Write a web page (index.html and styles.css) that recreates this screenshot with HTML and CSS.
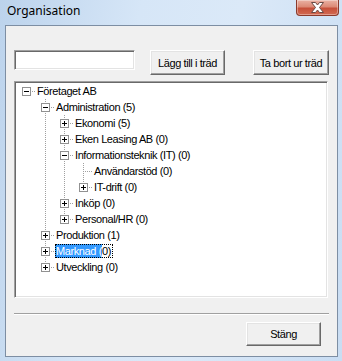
FILE: index.html
```html
<!doctype html>
<html>
<head>
    <meta charset="utf-8">
    <title>Organisation</title>
    <link rel="stylesheet" href="styles.css">
</head>
<body>
	<div class="titlebar">
		<span class="title">Organisation</span>
		<span class="close">
			<svg width="15" height="11" viewBox="0 0 15 11"><path d="M1.5 0.5h4l2 2.5 2-2.5h4l-4 5 4 5h-4l-2-2.5-2 2.5h-4l4-5z" fill="#fff" stroke="#6b4a44" stroke-width="1"/></svg>
		</span>
	</div>
	<div class="client">
		<div class="toprow">
			<input class="field" type="text">
			<button class="btn add">Lägg till i träd</button>
			<button class="btn remove">Ta bort ur träd</button>
		</div>
		<div class="tree">
			<div class="row"><span class="c root"><i class="box"></i></span><span class="label">Företaget AB</span></div>
			<div class="row"><span class="c"></span><span class="c t"><i class="box"></i></span><span class="label">Administration (5)</span></div>
			<div class="row"><span class="c"></span><span class="c i"></span><span class="c t"><i class="box plus"></i></span><span class="label">Ekonomi (5)</span></div>
			<div class="row"><span class="c"></span><span class="c i"></span><span class="c t"><i class="box plus"></i></span><span class="label">Eken Leasing AB (0)</span></div>
			<div class="row"><span class="c"></span><span class="c i"></span><span class="c t"><i class="box"></i></span><span class="label">Informationsteknik (IT) (0)</span></div>
			<div class="row"><span class="c"></span><span class="c i"></span><span class="c i"></span><span class="c t"></span><span class="label">Användarstöd (0)</span></div>
			<div class="row"><span class="c"></span><span class="c i"></span><span class="c i"></span><span class="c l"><i class="box plus"></i></span><span class="label">IT-drift (0)</span></div>
			<div class="row"><span class="c"></span><span class="c i"></span><span class="c t"><i class="box plus"></i></span><span class="label">Inköp (0)</span></div>
			<div class="row"><span class="c"></span><span class="c i"></span><span class="c l"><i class="box plus"></i></span><span class="label">Personal/HR (0)</span></div>
			<div class="row"><span class="c"></span><span class="c t"><i class="box plus"></i></span><span class="label">Produktion (1)</span></div>
			<div class="row"><span class="c"></span><span class="c t"><i class="box plus"></i></span><span class="label sel"><span class="hl">Marknad (</span>0)</span></div>
			<div class="row"><span class="c"></span><span class="c l"><i class="box plus"></i></span><span class="label">Utveckling (0)</span></div>
		</div>
		<div class="sep"></div>
		<div class="bottomrow">
			<button class="btn close-btn">Stäng</button>
		</div>
	</div>
</body>
</html>
```

FILE: styles.css
```css
*{margin:0; padding:0; box-sizing:border-box;}
body {width:342px; height:361px; overflow:hidden; background:linear-gradient(100deg,#bcd3ec 0%,#d6e6f7 35%,#dbe9f8 60%,#c9ddf3 100%);}

.titlebar {display:flex; align-items:flex-start; height:25px; padding-left:7px; padding-right:3px;}
.title {font:12px "Noto Sans",sans-serif; color:#000; line-height:16px; margin-top:3px;}
.close {margin-left:auto; width:43px; height:16px; display:flex; align-items:center; justify-content:center; border:1px solid #8a3a2c; border-top:none; border-radius:0 0 4px 4px; background:linear-gradient(#eab2a4 0%,#dc8a76 45%,#c6503a 55%,#d26a52 100%); box-shadow:inset 0 0 0 1px rgba(255,255,255,.35);}

.client {width:333px; height:332px; margin-left:5px; border:1px solid #7d8ea3; background:#f0f0f0; padding:24px 0 0 8px;}

.toprow {display:flex; align-items:flex-start;}
.field {width:121px; height:20px; background:#fff; border:1px solid; border-color:#a0a0a0 #fff #fff #a0a0a0; box-shadow:inset 1px 1px #696969, inset -1px -1px #e3e3e3; outline:none;}

.btn {height:25px; font:11px "Liberation Sans",sans-serif; letter-spacing:-0.4px; color:#000; background:#f0f0f0; border:1px solid; border-color:#fff #696969 #696969 #fff; box-shadow:inset -1px -1px #a0a0a0, inset 1px 1px #e3e3e3;}
.add {width:75px; margin-left:15px;}
.remove {width:76px; margin-left:28px;}

.tree {width:314px; height:217px; margin-top:6px; background:#fff; border:1px solid; border-color:#a0a0a0 #fff #fff #a0a0a0; box-shadow:inset 1px 1px #696969, inset -1px -1px #e3e3e3; padding:1px 0 0 2px;}
.row {display:flex; align-items:center; height:16px;}
.c {flex:none; width:19px; height:16px; display:flex; align-items:center;}
.root {background:repeating-linear-gradient(to right,#a0a0a0 0 1px,transparent 1px 2px) 9px 8px/10px 1px no-repeat;}
.i {background:repeating-linear-gradient(#a0a0a0 0 1px,transparent 1px 2px) 9px 0/1px 16px no-repeat;}
.t {background:repeating-linear-gradient(to right,#a0a0a0 0 1px,transparent 1px 2px) 9px 8px/10px 1px no-repeat, repeating-linear-gradient(#a0a0a0 0 1px,transparent 1px 2px) 9px 0/1px 16px no-repeat;}
.l {background:repeating-linear-gradient(to right,#a0a0a0 0 1px,transparent 1px 2px) 9px 8px/10px 1px no-repeat, repeating-linear-gradient(#a0a0a0 0 1px,transparent 1px 2px) 9px 0/1px 8px no-repeat;}
.box {display:block; width:9px; height:9px; margin-left:5px; margin-top:1px; border:1px solid #919191; background:linear-gradient(#000,#000) center/5px 1px no-repeat, #fff;}
.box.plus {background:linear-gradient(#000,#000) center/5px 1px no-repeat, linear-gradient(#000,#000) center/1px 5px no-repeat, #fff;}
.label {font:11px "Liberation Sans",sans-serif; letter-spacing:-0.4px; color:#000; line-height:14px; height:14px; padding:0 2px 0 1px; white-space:nowrap;}
.sel {outline:1px dotted #000; outline-offset:-1px; padding-left:0;}
.hl {display:inline-block; background:#3399ff; color:#fff; padding-left:1px; height:14px;}

.sep {width:315px; height:2px; margin-top:15px; border-top:1px solid #a0a0a0; border-bottom:1px solid #fff;}
.bottomrow {display:flex; margin-top:7px;}
.close-btn {width:75px; height:24px; margin-left:232px;}
```
